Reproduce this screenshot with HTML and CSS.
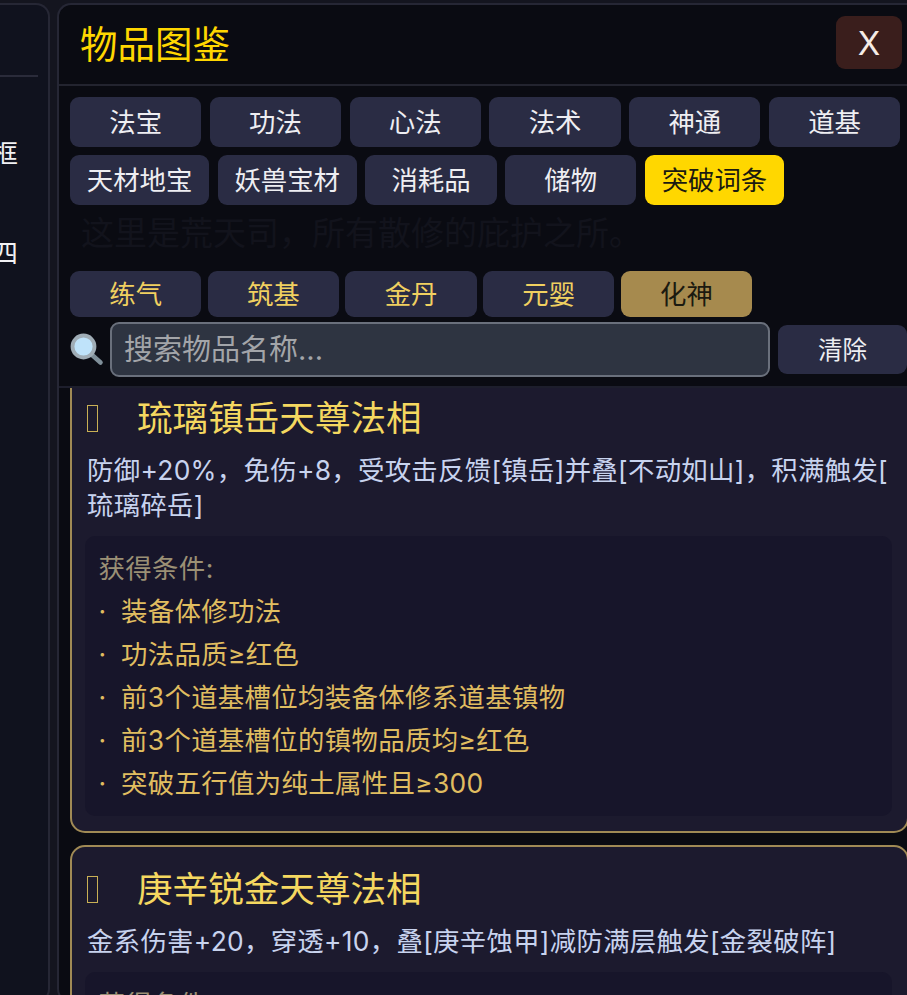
FILE: index.html
```html
<!DOCTYPE html>
<html lang="zh-CN">
<head>
<meta charset="utf-8">
<title>物品图鉴</title>
<link rel="stylesheet" href="styles.css">
</head>
<body>
<div class="app">
  <aside class="side">
    <div class="side-head"></div>
    <div class="side-item">头像框</div>
    <div class="side-item">卷四</div>
  </aside>
  <main class="panel">
    <p class="ghost">这里是荒天司，所有散修的庇护之所。</p>
    <header class="head">
      <h1 class="title">物品图鉴</h1>
      <button class="close">X</button>
    </header>
    <nav class="tabs">
      <button class="tab">法宝</button>
      <button class="tab">功法</button>
      <button class="tab">心法</button>
      <button class="tab">法术</button>
      <button class="tab">神通</button>
      <button class="tab">道基</button>
      <button class="tab">天材地宝</button>
      <button class="tab">妖兽宝材</button>
      <button class="tab">消耗品</button>
      <button class="tab">储物</button>
      <button class="tab tab-on">突破词条</button>
    </nav>
    <nav class="ranks">
      <button class="rank">练气</button>
      <button class="rank">筑基</button>
      <button class="rank">金丹</button>
      <button class="rank">元婴</button>
      <button class="rank rank-on">化神</button>
    </nav>
    <div class="search">
      <svg class="lens" viewBox="0 0 34 34" aria-hidden="true">
        <path d="M21 21 L30.5 29.5" stroke="#7f8f99" stroke-width="4.6" stroke-linecap="round"/>
        <circle cx="13.5" cy="13.5" r="11" fill="#bfe3fa" stroke="#a0adb6" stroke-width="3.8"/>
      </svg>
      <input class="field" type="text" placeholder="搜索物品名称...">
      <button class="clear">清除</button>
    </div>
    <section class="list">
      <article class="card card-first">
        <h2 class="card-title"><span class="tofu"></span>琉璃镇岳天尊法相</h2>
        <p class="desc">防御+20%，免伤+8，受攻击反馈[镇岳]并叠[不动如山]，积满触发[琉璃碎岳]</p>
        <div class="cond">
          <div class="cond-head">获得条件:</div>
          <div class="cond-item"><span class="dot">·</span>装备体修功法</div>
          <div class="cond-item"><span class="dot">·</span>功法品质≥红色</div>
          <div class="cond-item"><span class="dot">·</span>前3个道基槽位均装备体修系道基镇物</div>
          <div class="cond-item"><span class="dot">·</span>前3个道基槽位的镇物品质均≥红色</div>
          <div class="cond-item"><span class="dot">·</span>突破五行值为纯土属性且≥300</div>
        </div>
      </article>
      <article class="card">
        <h2 class="card-title"><span class="tofu"></span>庚辛锐金天尊法相</h2>
        <p class="desc">金系伤害+20，穿透+10，叠[庚辛蚀甲]减防满层触发[金裂破阵]</p>
        <div class="cond">
          <div class="cond-head">获得条件:</div>
        </div>
      </article>
    </section>
  </main>
</div>
</body>
</html>
```
FILE: styles.css
```css
* { box-sizing: border-box; }
html, body { margin: 0; height: 100%; overflow: hidden; background: #14151f; }
body, button, input { font-family: Inter, "Noto Sans CJK SC", sans-serif; }
.app { display: flex; gap: 7px; width: 950px; height: 995px; padding-top: 3px; }
.side { flex: 0 0 50px; height: 1000px; background: #10121e; border: 2px solid #262735; border-left: 0; border-radius: 0 14px 14px 0; overflow: hidden; color: #f1f1f4; font-size: 26.4px; }
.side-head { height: 72px; margin-right: 10px; border-bottom: 2px solid #2a2b3a; }
.side-item { display: flex; justify-content: flex-end; align-items: center; height: 100px; padding-right: 30px; white-space: nowrap; }
.side-head + .side-item { margin-top: 24px; }
.panel { position: relative; flex: 0 0 863px; height: 1000px; background: #0a0b12; border: 2px solid #262735; border-right: 0; border-radius: 14px 0 0 14px; overflow: hidden; display: flex; flex-direction: column; }
.ghost { position: absolute; left: 22px; top: 205px; margin: 0; font-size: 33px; line-height: 46px; color: #12131c; white-space: nowrap; }
.head { display: flex; justify-content: space-between; align-items: center; height: 81px; padding: 0 18px 4px 21px; border-bottom: 2px solid #23242f; flex: none; }
.title { margin: 0 0 3px; font-size: 37.5px; font-weight: 400; color: #ffd700; }
.close { width: 66px; height: 53px; border: 0; border-radius: 9px; background: #3a1e1c; color: #f5ece6; font-size: 33px; padding: 0; }
.tabs { display: flex; flex-wrap: wrap; gap: 8.5px; padding: 11px 0 0 11px; height: 185px; flex: none; align-content: flex-start; position: relative; }
.tab { min-width: 131.3px; height: 49.5px; padding: 0 16.8px 3px; border: 0; border-radius: 9px; background: #2a2c44; color: #eeeef2; font-size: 26.4px; }
.tab-on { background: #ffd700; color: #1b1a10; }
.ranks { display: flex; gap: 6.4px; padding-left: 11px; flex: none; position: relative; }
.rank { width: 131.3px; height: 45.5px; padding: 0 0 3px; border: 0; border-radius: 9px; background: #2a2c44; color: #f0d060; font-size: 26.4px; }
.rank-on { background: #a68a4e; color: #1b1a10; }
.search { display: flex; align-items: center; gap: 8px; height: 56px; margin-top: 5px; padding-left: 11px; padding-right: 13px; flex: none; }
.lens { width: 34px; height: 34px; flex: none; margin-right: -2px; }
.field { flex: 1; min-width: 0; height: 55px; padding: 0 12px; border: 2px solid #6a707c; border-radius: 9px; background: #2e3441; font-size: 29px; color: #eee; outline: 0; }
.field::placeholder { color: #a3a5a9; opacity: 1; }
.clear { flex: 0 0 129px; height: 49px; border: 0; border-radius: 9px; background: #2a2c44; color: #eeeef2; font-size: 24.5px; padding: 0 0 3px; }
.list { flex: 1; min-height: 0; margin-top: 8px; padding: 0 11px; border-top: 2px solid #1d1e2c; overflow: hidden; }
.card { background: #1c1a2e; border: 2px solid #a08a55; border-radius: 15px; padding: 17px 15px 15px; margin-bottom: 12px; }
.card-first { margin-top: -14px; }
.card-title { display: flex; align-items: center; margin: 0; height: 46px; font-size: 35.6px; font-weight: 400; color: #f5d860; }
.tofu { width: 11px; height: 27px; margin: 5px 39px 0 0; border: 1.5px solid #c9b055; flex: none; }
.desc { margin: 14px 0 0; font-size: 26.4px; line-height: 35px; letter-spacing: .3px; line-break: anywhere; color: #c8d3ee; }
.cond { margin: 13px 0 0 -2px; padding: 11px 13.5px 10px; background: #17152a; border-radius: 10px; }
.cond-head { font-size: 26.4px; line-height: 43px; letter-spacing: .4px; color: #9b9075; }
.cond-item { display: flex; font-size: 26.4px; line-height: 43.2px; letter-spacing: .35px; color: #e0bd60; }
.dot { width: 22.5px; flex: none; }
```
